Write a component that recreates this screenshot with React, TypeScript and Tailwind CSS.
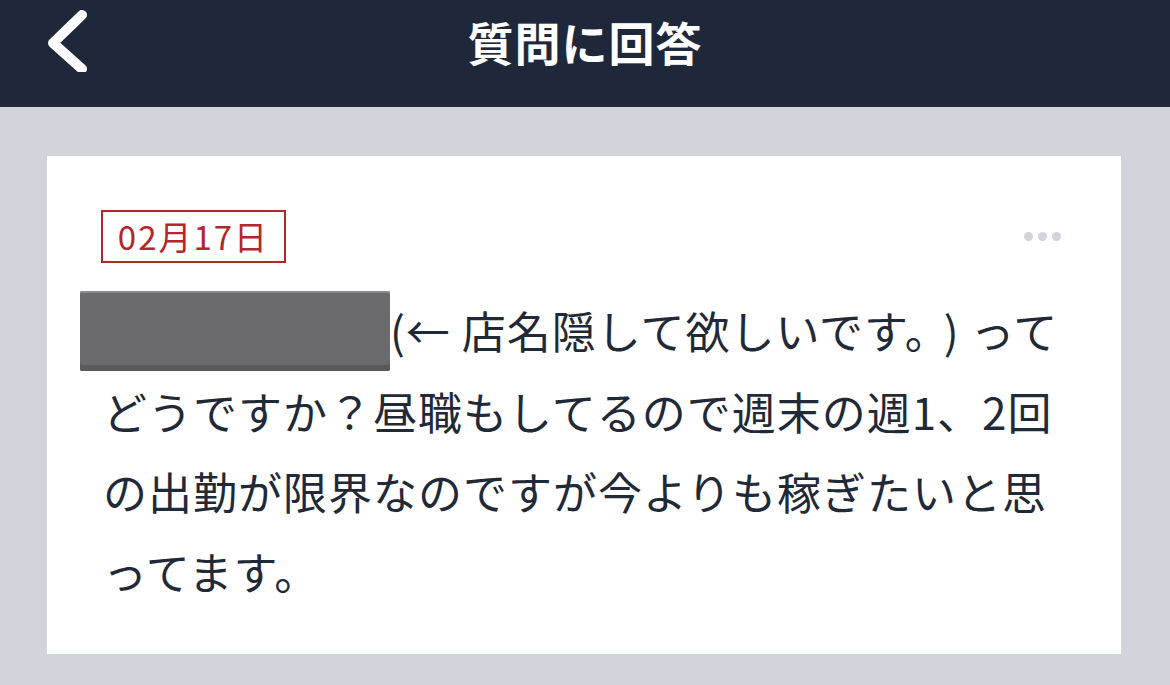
import React from "react";

const font = { fontFamily: '"Noto Sans CJK JP", "Noto Sans", sans-serif' };

const BackIcon: React.FC = () => (
  <svg width="48" height="70" viewBox="0 0 48 70" className="block">
    <polyline
      points="37,13 8,41 37,67"
      fill="none"
      stroke="#ffffff"
      strokeWidth="10"
      strokeLinecap="round"
      strokeLinejoin="round"
    />
  </svg>
);

export default function App() {
  return (
    <div className="w-[1170px] h-[685px] bg-[#d1d5db] overflow-hidden" style={font}>
      <header className="relative h-[107px] bg-[#1f283a] flex items-center justify-center">
        <div className="absolute left-[45px] top-[2px]">
          <BackIcon />
        </div>
        <h1 className="text-white text-[46px] font-bold leading-none -mt-[26px] tracking-[1px]">
          質問に回答
        </h1>
      </header>

      <main className="pt-[49px] pl-[47px] pr-[49px]">
        <section className="bg-white h-[498px] pl-[54px] pr-[60px] pt-[54px]">
          <div className="flex items-center justify-between">
            <span className="inline-flex items-center justify-center w-[185px] h-[53px] border-2 border-[#b3262b] text-[#b3262b] text-[33px] leading-none tracking-[2px]">
              02月17日
            </span>
            <div className="flex gap-[5px] items-center">
              <span className="w-[9px] h-[9px] rounded-full bg-[#d1d5db]" />
              <span className="w-[9px] h-[9px] rounded-full bg-[#d1d5db]" />
              <span className="w-[9px] h-[9px] rounded-full bg-[#d1d5db]" />
            </div>
          </div>

          <p className="mt-[27px] pl-[2px] text-[#1f2937] text-[44px] leading-[80px] tracking-[1px] whitespace-nowrap">
            <span className="inline-block align-middle -ml-[23px] -mt-[12px] w-[310px] h-[80px] bg-[#6b6b6d] rounded-[2px] shadow-[inset_0_-6px_0_#59595b,inset_0_2px_0_#8a8a8c]" />
            (← 店名隠して欲しいです。<span className="ml-[16px]">)</span> って
            <br />
            どうですか？昼職もしてるので週末の週1、2回
            <br />
            の出勤が限界なのですが今よりも稼ぎたいと思
            <br />
            ってます。
          </p>
        </section>
      </main>
    </div>
  );
}
